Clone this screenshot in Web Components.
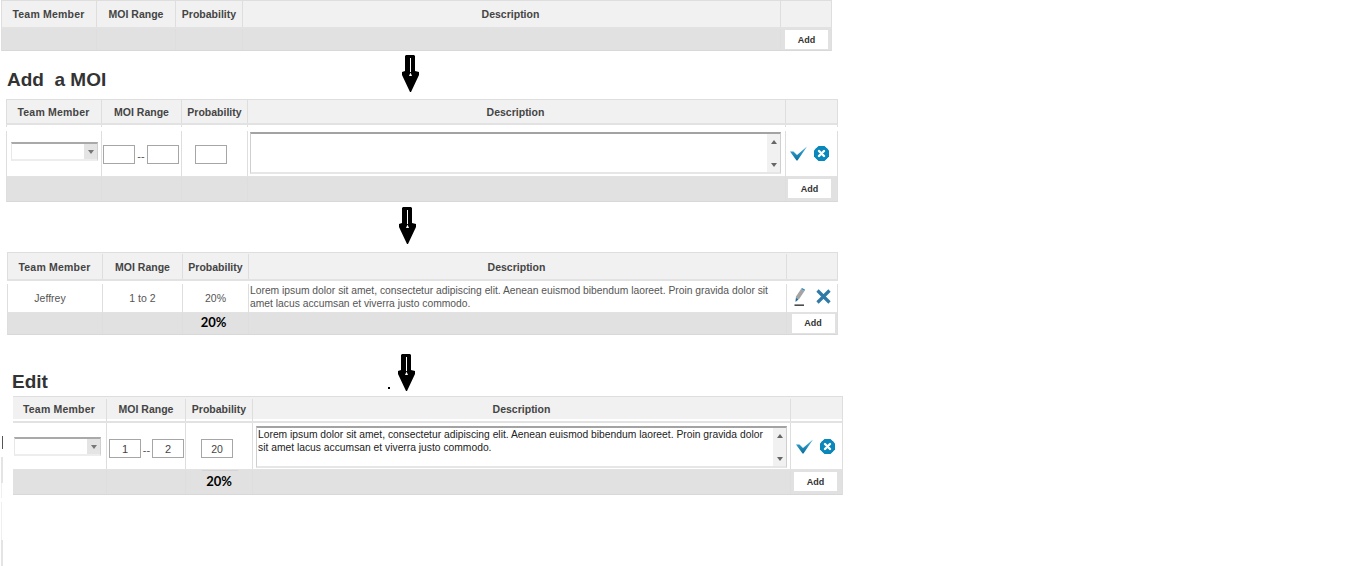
<!DOCTYPE html>
<html>
<head>
<meta charset="utf-8">
<title>MOI</title>
<style>
  html, body { margin: 0; background: #fff; }
  body { position: relative; font: 10.5px "Liberation Sans", Arial, sans-serif; color: #444; height: 566px; overflow: hidden; }
</style>
</head>
<body>
<moi-table style="--cols:95px 79px 67px 538px 51px; margin-left:1px; width:831px; height:51px">
  <moi-row kind="head" style="--h:28px"><moi-cell first>Team Member</moi-cell><moi-cell>MOI Range</moi-cell><moi-cell>Probability</moi-cell><moi-cell style="padding-right:2px">Description</moi-cell><moi-cell></moi-cell></moi-row>
  <moi-row kind="foot" style="--h:22px"><moi-cell></moi-cell><moi-cell></moi-cell><moi-cell></moi-cell><moi-cell></moi-cell><moi-cell><moi-button>Add</moi-button></moi-cell></moi-row>
</moi-table>

<moi-step style="--h:48px; --arrow-x:402px; --arrow-y:4px; --head-x:7px; --head-y:17px"><span>Add  a MOI</span></moi-step>

<moi-table style="--cols:95px 80px 66px 538px 53px; margin-left:6px; width:832px; height:103px">
  <moi-row kind="head" style="--h:25px"><moi-cell first>Team Member</moi-cell><moi-cell>MOI Range</moi-cell><moi-cell>Probability</moi-cell><moi-cell style="padding-right:2px">Description</moi-cell><moi-cell></moi-cell></moi-row>
  <moi-row kind="gap" style="--h:2px"><moi-cell></moi-cell><moi-cell></moi-cell><moi-cell></moi-cell><moi-cell></moi-cell><moi-cell></moi-cell></moi-row>
  <moi-row kind="gap" plain style="--h:4px"><moi-cell plain></moi-cell><moi-cell plain></moi-cell><moi-cell plain></moi-cell><moi-cell plain></moi-cell><moi-cell plain></moi-cell></moi-row>
  <moi-row kind="body" style="--h:46px">
    <moi-cell style="padding:11px 0 0 4px; align-items:flex-start; justify-content:flex-start"><moi-select></moi-select></moi-cell>
    <moi-cell style="padding:14px 0 0 1px; align-items:flex-start; justify-content:flex-start"><moi-range></moi-range></moi-cell>
    <moi-cell style="padding:14px 0 0 13px; align-items:flex-start; justify-content:flex-start"><moi-input></moi-input></moi-cell>
    <moi-cell style="padding:1px 0 0 2px; align-items:flex-start; justify-content:flex-start"><moi-textarea></moi-textarea></moi-cell>
    <moi-cell style="gap:7px; padding-left:4px; justify-content:flex-start"><moi-icon name="check"></moi-icon><moi-icon name="cancel"></moi-icon></moi-cell>
  </moi-row>
  <moi-row kind="foot" style="--h:25px"><moi-cell></moi-cell><moi-cell></moi-cell><moi-cell></moi-cell><moi-cell></moi-cell><moi-cell style="padding:0 0 1px 2px; justify-content:flex-start"><moi-button>Add</moi-button></moi-cell></moi-row>
</moi-table>

<moi-step style="--h:50px; --arrow-x:399px; --arrow-y:5px"></moi-step>

<moi-table style="--cols:95px 80px 66px 538px 52px; margin-left:7px; width:831px; height:83px">
  <moi-row kind="head" style="--h:28px; padding-top:1px"><moi-cell first>Team Member</moi-cell><moi-cell>MOI Range</moi-cell><moi-cell>Probability</moi-cell><moi-cell style="padding-right:2px">Description</moi-cell><moi-cell></moi-cell></moi-row>
  <moi-row kind="gap" plain style="--h:3px"><moi-cell plain></moi-cell><moi-cell plain></moi-cell><moi-cell plain></moi-cell><moi-cell plain></moi-cell><moi-cell plain></moi-cell></moi-row>
  <moi-row kind="body" style="--h:29px">
    <moi-cell style="padding:0 10px 3px 0">Jeffrey</moi-cell>
    <moi-cell style="padding-bottom:3px">1 to 2</moi-cell>
    <moi-cell style="padding-bottom:3px">20%</moi-cell>
    <moi-cell style="justify-content:flex-start; padding:0 0 5px 1px; line-height:13px; font-size:10.3px">Lorem ipsum dolor sit amet, consectetur adipiscing elit. Aenean euismod bibendum laoreet. Proin gravida dolor sit amet lacus accumsan et viverra justo commodo.</moi-cell>
    <moi-cell style="gap:11px; padding:0 0 6px 7px; justify-content:flex-start"><moi-icon name="pencil"></moi-icon><moi-icon name="close"></moi-icon></moi-cell>
  </moi-row>
  <moi-row kind="foot" style="--h:22px"><moi-cell></moi-cell><moi-cell></moi-cell><moi-cell style="padding:0 4px 4px 0"><moi-total>20%</moi-total></moi-cell><moi-cell></moi-cell><moi-cell style="padding-bottom:1px"><moi-button>Add</moi-button></moi-cell></moi-row>
</moi-table>

<moi-step style="--h:61px; --arrow-x:398px; --arrow-y:19px; --head-x:12px; --head-y:35px" dot><span>Edit</span></moi-step>

<moi-table style="--cols:94px 79px 67px 538px 52px; --side-left:0; margin-left:13px; width:830px; height:99px">
  <moi-row kind="head" style="--h:22px; border-bottom:0; padding-top:2px"><moi-cell first>Team Member</moi-cell><moi-cell>MOI Range</moi-cell><moi-cell>Probability</moi-cell><moi-cell>Description</moi-cell><moi-cell></moi-cell></moi-row>
  <moi-row kind="gap" style="--h:4px; border-bottom:2px solid #e2e2e2"><moi-cell></moi-cell><moi-cell></moi-cell><moi-cell></moi-cell><moi-cell></moi-cell><moi-cell></moi-cell></moi-row>
  <moi-row kind="body" style="--h:47px">
    <moi-cell style="padding:14px 0 0 1px; align-items:flex-start; justify-content:flex-start"><moi-select></moi-select></moi-cell>
    <moi-cell style="padding:16px 0 0 2px; align-items:flex-start; justify-content:flex-start"><moi-range a="1" b="2" style="--sep:9px"></moi-range></moi-cell>
    <moi-cell style="padding:16px 0 0 15px; align-items:flex-start; justify-content:flex-start"><moi-input value="20"></moi-input></moi-cell>
    <moi-cell style="padding:3px 0 0 3px; align-items:flex-start; justify-content:flex-start; font-size:10.3px"><moi-textarea>Lorem ipsum dolor sit amet, consectetur adipiscing elit. Aenean euismod bibendum laoreet. Proin gravida dolor sit amet lacus accumsan et viverra justo commodo.</moi-textarea></moi-cell>
    <moi-cell style="gap:7px; padding-left:5px; justify-content:flex-start"><moi-icon name="check"></moi-icon><moi-icon name="cancel"></moi-icon></moi-cell>
  </moi-row>
  <moi-row kind="foot" style="--h:25px"><moi-cell></moi-cell><moi-cell></moi-cell><moi-cell style="padding-bottom:3px"><moi-total rule>20%</moi-total></moi-cell><moi-cell></moi-cell><moi-cell style="padding:0 0 1px 3px; justify-content:flex-start"><moi-button>Add</moi-button></moi-cell></moi-row>
</moi-table>

<moi-scraps></moi-scraps>

<script>
class MoiTable extends HTMLElement {
  constructor() {
    super();
    this.attachShadow({ mode: 'open' });
    this.shadowRoot.innerHTML = `
      <style>
        :host { display: block; box-sizing: border-box; border-top: 1px solid #dedede; }
      </style>
      <slot></slot>
    `;
  }
}

class MoiRow extends HTMLElement {
  constructor() {
    super();
    this.attachShadow({ mode: 'open' });
    this.shadowRoot.innerHTML = `
      <style>
        :host {
          display: grid;
          grid-template-columns: var(--cols);
          height: var(--h);
          box-sizing: border-box;
          border-left: var(--side-left, 1px) solid #dedede;
          border-right: 1px solid #dedede;
        }
        :host([kind="head"]) { background: #f1f1f1; font-weight: bold; border-bottom: 2px solid #e2e2e2; }
        :host([kind="foot"]) { background: #e1e1e1; border-bottom: 1px solid #d8d8d8; }
        :host([kind="body"]) { background: #fff; color: #555; border-bottom: 1px solid #e2e2e2; }
        :host([kind="gap"]) { background: #fff; }
        :host([plain]) { border-left-color: transparent; border-right-color: transparent; }
      </style>
      <slot></slot>
    `;
  }
}

class MoiCell extends HTMLElement {
  constructor() {
    super();
    this.attachShadow({ mode: 'open' });
    this.shadowRoot.innerHTML = `
      <style>
        :host {
          display: flex;
          align-items: center;
          justify-content: center;
          box-sizing: border-box;
          min-width: 0;
          border-right: 1px solid #dedede;
        }
        :host(:last-child), :host([plain]) { border-right: 0; }
        :host([first]) { letter-spacing: .2px; padding-right: 1px; }
      </style>
      <slot></slot>
    `;
  }
}

class MoiButton extends HTMLElement {
  constructor() {
    super();
    this.attachShadow({ mode: 'open' });
    this.shadowRoot.innerHTML = `
      <style>
        :host {
          display: flex;
          align-items: center;
          justify-content: center;
          width: 43px;
          height: 19px;
          background: #fff;
          color: #333;
          font-size: 9px;
          font-weight: bold;
        }
      </style>
      <slot></slot>
    `;
  }
}

class MoiTotal extends HTMLElement {
  constructor() {
    super();
    this.attachShadow({ mode: 'open' });
    this.shadowRoot.innerHTML = `
      <style>
        :host { display: block; position: relative; color: #000; font: 700 13px Lato, sans-serif; }
        :host([rule])::before {
          content: "";
          position: absolute;
          left: -4px;
          top: -3px;
          width: 36px;
          height: 1px;
          background: #d4d4d4;
        }
      </style>
      <slot></slot>
    `;
  }
}

class MoiSelect extends HTMLElement {
  constructor() {
    super();
    this.attachShadow({ mode: 'open' });
    this.shadowRoot.innerHTML = `
      <style>
        :host {
          display: flex;
          justify-content: flex-end;
          width: 87px;
          height: 19px;
          box-sizing: border-box;
          background: #fff;
          border-top: 2px solid #a9a9a9;
          border-left: 1px solid #e8e8e8;
          border-right: 1px solid #d0d0d0;
          border-bottom: 2px solid #ededed;
        }
        .btn { width: 13px; background: #e4e4e4; display: flex; align-items: center; justify-content: center; }
        .tri { border: 3px solid transparent; border-top: 4px solid #777; border-bottom: 0; }
      </style>
      <div class="btn"><div class="tri"></div></div>
    `;
  }
}

class MoiInput extends HTMLElement {
  constructor() {
    super();
    this.attachShadow({ mode: 'open' });
  }
  connectedCallback() {
    this.shadowRoot.innerHTML = `
      <style>
        :host {
          display: flex;
          align-items: center;
          justify-content: center;
          width: 32px;
          height: 19px;
          box-sizing: border-box;
          border: 1px solid #a6a6a6;
          background: #fff;
          color: #444;
        }
      </style>
      <span>${this.getAttribute('value') || ''}</span>
    `;
  }
}

class MoiRange extends HTMLElement {
  constructor() {
    super();
    this.attachShadow({ mode: 'open' });
  }
  connectedCallback() {
    this.shadowRoot.innerHTML = `
      <style>
        :host { display: flex; align-items: center; gap: 1px; color: #555; font-size: 11px; }
        .sep { width: var(--sep, 10px); text-align: center; padding-top: 2px; }
      </style>
      <moi-input value="${this.getAttribute('a') || ''}"></moi-input>
      <span class="sep">--</span>
      <moi-input value="${this.getAttribute('b') || ''}"></moi-input>
    `;
  }
}

class MoiTextarea extends HTMLElement {
  constructor() {
    super();
    this.attachShadow({ mode: 'open' });
    this.shadowRoot.innerHTML = `
      <style>
        :host {
          display: flex;
          width: 531px;
          height: 42px;
          box-sizing: border-box;
          background: #fff;
          border-top: 2px solid #a3a3a3;
          border-left: 1px solid #cfcfcf;
          border-right: 1px solid #cfcfcf;
          border-bottom: 2px solid #e6e6e6;
          color: #222;
          line-height: 13px;
        }
        .text { flex: 1; min-width: 0; padding: 0 2px 0 1px; }
        .bar {
          width: 13px;
          background: #f1f1f1;
          display: flex;
          flex-direction: column;
          align-items: center;
          justify-content: space-between;
          padding: 6px 0 5px;
          box-sizing: border-box;
        }
        .up { border: 3px solid transparent; border-bottom: 4px solid #666; border-top: 0; }
        .down { border: 3px solid transparent; border-top: 4px solid #666; border-bottom: 0; }
      </style>
      <div class="text"><slot></slot></div>
      <div class="bar"><div class="up"></div><div class="down"></div></div>
    `;
  }
}

const ICONS = {
  check: `<svg width="17" height="15" viewBox="0 0 17 15"><defs><linearGradient id="g" x1="0" y1="0" x2="0" y2="1"><stop offset="0" stop-color="#3fb0dc"/><stop offset="1" stop-color="#0a6d9c"/></linearGradient></defs><path d="M0 5.5L3.5 5.5L7 9L17 0.5L7.5 14.5H6.5Z" fill="url(#g)"/></svg>`,
  cancel: `<svg width="15" height="15" viewBox="0 0 15 15"><path d="M4.5 0H10.5L15 4.5V10.5L10.5 15H4.5L0 10.5V4.5Z" fill="#0a87bb"/><circle cx="7.5" cy="7.5" r="7.3" fill="#0a87bb"/><path d="M5 5L10 10M10 5L5 10" stroke="#fff" stroke-width="2.4" stroke-linecap="round"/></svg>`,
  pencil: `<svg width="11" height="18" viewBox="0 0 11 18"><path d="M1.5 13L2 8.5L7 1L10.5 3L5.5 10.5Z" fill="#a4a4a4"/><path d="M7 1L8 0L11 1.5L10.5 3Z" fill="#3d8bb8"/><path d="M1.5 14L2 10L4.5 11.5Z" fill="#1d6f9e"/><rect x="0.5" y="16.5" width="9.5" height="1.3" fill="#222"/></svg>`,
  close: `<svg width="15" height="15" viewBox="0 0 15 15"><path d="M1.5 1.5L13.5 13.5M13.5 1.5L1.5 13.5" stroke="#2f7aa6" stroke-width="3.2"/></svg>`
};

class MoiIcon extends HTMLElement {
  constructor() {
    super();
    this.attachShadow({ mode: 'open' });
  }
  connectedCallback() {
    this.shadowRoot.innerHTML = `
      <style>:host { display: flex; } svg { display: block; }</style>
      ${ICONS[this.getAttribute('name')]}
    `;
  }
}

// arrow + optional heading between two tables
class MoiStep extends HTMLElement {
  constructor() {
    super();
    this.attachShadow({ mode: 'open' });
    this.shadowRoot.innerHTML = `
      <style>
        :host {
          display: flex;
          position: relative;
          height: var(--h);
          color: #333;
          font-size: 19px;
          font-weight: bold;
        }
        .head {
          box-sizing: border-box;
          width: var(--arrow-x);
          padding: var(--head-y, 0) 0 0 var(--head-x, 0);
          line-height: 23px;
          white-space: pre;
        }
        .arrow { padding-top: var(--arrow-y); }
        svg { display: block; }
        .dot { display: none; position: absolute; left: 388px; top: 52px; width: 2px; height: 2px; background: #000; }
        :host([dot]) .dot { display: block; }
      </style>
      <div class="head"><slot></slot></div>
      <div class="arrow">
        <svg width="17" height="37" viewBox="0 0 17 37">
          <path d="M3 1L4 0H12L13 1V16L17 17V20L9 37H8L0 20V17L3 16Z" fill="#000"/>
          <path d="M8.5 3V17" stroke="#fff" stroke-width="1"/>
          <path d="M7 21L8.5 17.5L10 21Z" fill="#fff"/>
        </svg>
      </div>
      <div class="dot"></div>
    `;
  }
}

// leftover marks along the left edge of the shot
class MoiScraps extends HTMLElement {
  constructor() {
    super();
    this.attachShadow({ mode: 'open' });
    this.shadowRoot.innerHTML = `
      <style>
        :host { position: absolute; left: 0; top: 0; }
        div { position: absolute; }
      </style>
      <div style="left:2px; top:436px; width:1px; height:13px; background:#555"></div>
      <div style="left:1px; top:457px; width:2px; height:26px; background:#e4e4e4"></div>
      <div style="left:1px; top:483px; width:1px; height:15px; background:#efefef"></div>
      <div style="left:1px; top:502px; width:1px; height:38px; background:#efefef"></div>
      <div style="left:1px; top:540px; width:2px; height:26px; background:#e4e4e4"></div>
    `;
  }
}

customElements.define('moi-table', MoiTable);
customElements.define('moi-row', MoiRow);
customElements.define('moi-cell', MoiCell);
customElements.define('moi-button', MoiButton);
customElements.define('moi-total', MoiTotal);
customElements.define('moi-select', MoiSelect);
customElements.define('moi-input', MoiInput);
customElements.define('moi-range', MoiRange);
customElements.define('moi-textarea', MoiTextarea);
customElements.define('moi-icon', MoiIcon);
customElements.define('moi-step', MoiStep);
customElements.define('moi-scraps', MoiScraps);
</script>
</body>
</html>
